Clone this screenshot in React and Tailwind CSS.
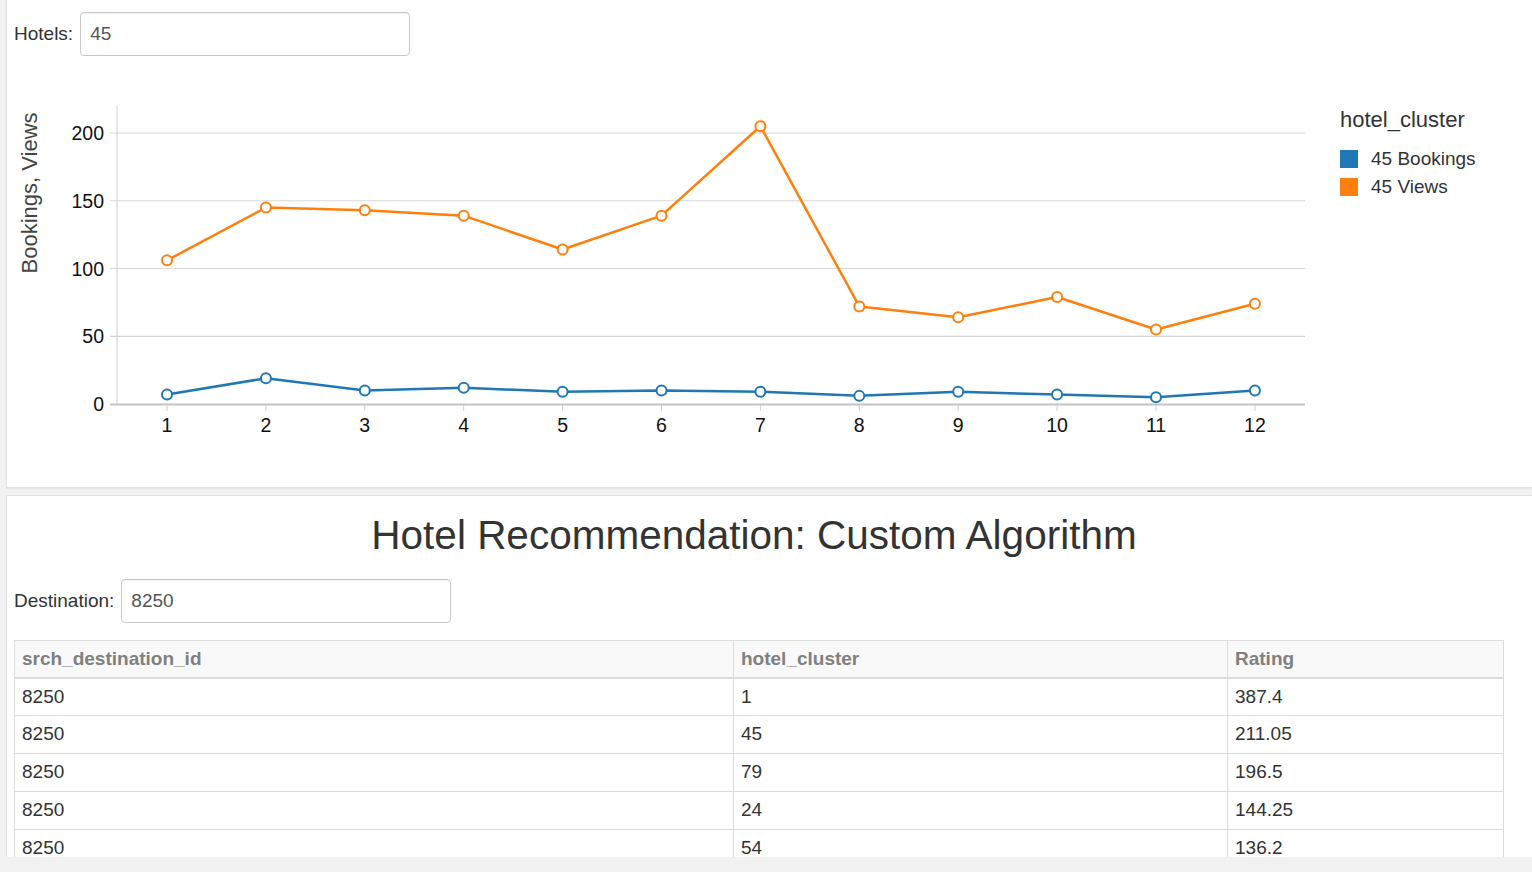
import React from 'react';

const views = [106, 145, 143, 139, 114, 139, 205, 72, 64, 79, 55, 74];
const bookings = [7, 19, 10, 12, 9, 10, 9, 6, 9, 7, 5, 10];

const xAt = (i) => 167 + i * 98.9;
const yAt = (v) => 404 - v * 1.355;

const rows = [
  ['8250', '1', '387.4'],
  ['8250', '45', '211.05'],
  ['8250', '79', '196.5'],
  ['8250', '24', '144.25'],
  ['8250', '54', '136.2'],
];

const Series = ({ data, color }) => (
  <g>
    <polyline
      points={data.map((v, i) => `${xAt(i)},${yAt(v)}`).join(' ')}
      fill="none"
      stroke={color}
      strokeWidth="2.5"
      strokeLinejoin="round"
    />
    {data.map((v, i) => (
      <circle key={i} cx={xAt(i)} cy={yAt(v)} r="5" fill="white" stroke={color} strokeWidth="2" />
    ))}
  </g>
);

// viewBox is in page coordinates, so the numbers below read straight off the screenshot
const Chart = () => (
  <svg width="1306" height="404" viewBox="14 66 1306 404" className="block shrink-0" style={{ fontFamily: '"Liberation Sans", Arial, sans-serif' }}>
    {[50, 100, 150, 200].map((v) => (
      <line key={v} x1="110" x2="1305" y1={yAt(v)} y2={yAt(v)} stroke={v === 50 ? '#c4c4c4' : '#d9d9d9'} strokeWidth="1" />
    ))}
    <line x1="117" x2="117" y1="106" y2="404" stroke="#cfcfcf" strokeWidth="1" />
    <line x1="110" x2="1305" y1="404.5" y2="404.5" stroke="#c4c4c4" strokeWidth="2" />
    {[0, 50, 100, 150, 200].map((v) => (
      <text key={v} x="104" y={yAt(v) + 7} textAnchor="end" fontSize="19.5" fill="#111">
        {v}
      </text>
    ))}
    {views.map((_, i) => (
      <g key={i}>
        <line x1={xAt(i)} x2={xAt(i)} y1="405" y2="411" stroke="#cfcfcf" strokeWidth="1" />
        <text x={xAt(i)} y="432" textAnchor="middle" fontSize="19.5" fill="#111">
          {i + 1}
        </text>
      </g>
    ))}
    <text x="0" y="0" transform="translate(37 193) rotate(-90)" textAnchor="middle" fontSize="22" fill="#444">
      Bookings, Views
    </text>
    <Series data={views} color="#ff7f0e" />
    <Series data={bookings} color="#1f77b4" />
  </svg>
);

const Field = ({ label, value }) => (
  <div className="flex items-center gap-[7px]">
    <span className="text-[19px] text-[#333]">{label}</span>
    <div className="w-[330px] h-[44px] border border-[#c8c8c8] rounded-[4px] flex items-center pl-[9px] text-[19px] text-[#555] shadow-[inset_0_1px_1px_rgba(0,0,0,0.06)]">
      {value}
    </div>
  </div>
);

export default function App() {
  return (
    <div className="bg-[#f2f2f2] w-full h-[872px] overflow-hidden" style={{ fontFamily: '"Liberation Sans", Arial, sans-serif' }}>
      <div className="h-[857px] overflow-hidden pl-[6px]">
        <div className="bg-white border-l border-b border-[#e2e2e2] shadow-[0_1px_2px_rgba(0,0,0,0.06)] pl-[7px] pt-[12px] h-[488px]">
          <Field label="Hotels:" value="45" />
          <div className="flex mt-[10px] -ml-[7px] pl-[7px]">
            <Chart />
            <div className="ml-[20px] mt-[41px] text-[#333]">
              <div className="text-[22px] leading-[26px]">hotel_cluster</div>
              <div className="mt-[17px] flex flex-col gap-[10px]">
                <div className="flex items-center gap-[13px] h-[18px]">
                  <span className="w-[18px] h-[18px] bg-[#1f77b4]" />
                  <span className="text-[19px]">45 Bookings</span>
                </div>
                <div className="flex items-center gap-[13px] h-[18px]">
                  <span className="w-[18px] h-[18px] bg-[#ff7f0e]" />
                  <span className="text-[19px]">45 Views</span>
                </div>
              </div>
            </div>
          </div>
        </div>

        <div className="bg-white border-l border-t border-[#e2e2e2] mt-[7px] pl-[7px] pt-[17px] h-[400px]">
          <div className="w-[1490px] pr-[10px] text-center text-[40.5px] leading-[44px] text-[#333]">
            Hotel Recommendation: Custom Algorithm
          </div>
          <div className="mt-[22px]">
            <Field label="Destination:" value="8250" />
          </div>
          <table className="mt-[17px] w-[1490px] border-collapse text-[19px] text-[#333]">
            <thead>
              <tr className="bg-[#f9f9f9]">
                <th className="w-[719px] h-[37px] border border-[#dddddd] border-b-2 px-[7px] text-left font-bold text-[#808080]">srch_destination_id</th>
                <th className="w-[494px] h-[37px] border border-[#dddddd] border-b-2 px-[7px] text-left font-bold text-[#808080]">hotel_cluster</th>
                <th className="h-[37px] border border-[#dddddd] border-b-2 px-[7px] text-left font-bold text-[#808080]">Rating</th>
              </tr>
            </thead>
            <tbody>
              {rows.map((r, i) => (
                <tr key={i}>
                  {r.map((c, j) => (
                    <td key={j} className="h-[38px] border border-[#dddddd] px-[7px] leading-[36px] align-top">
                      {c}
                    </td>
                  ))}
                </tr>
              ))}
            </tbody>
          </table>
        </div>
      </div>
    </div>
  );
}
